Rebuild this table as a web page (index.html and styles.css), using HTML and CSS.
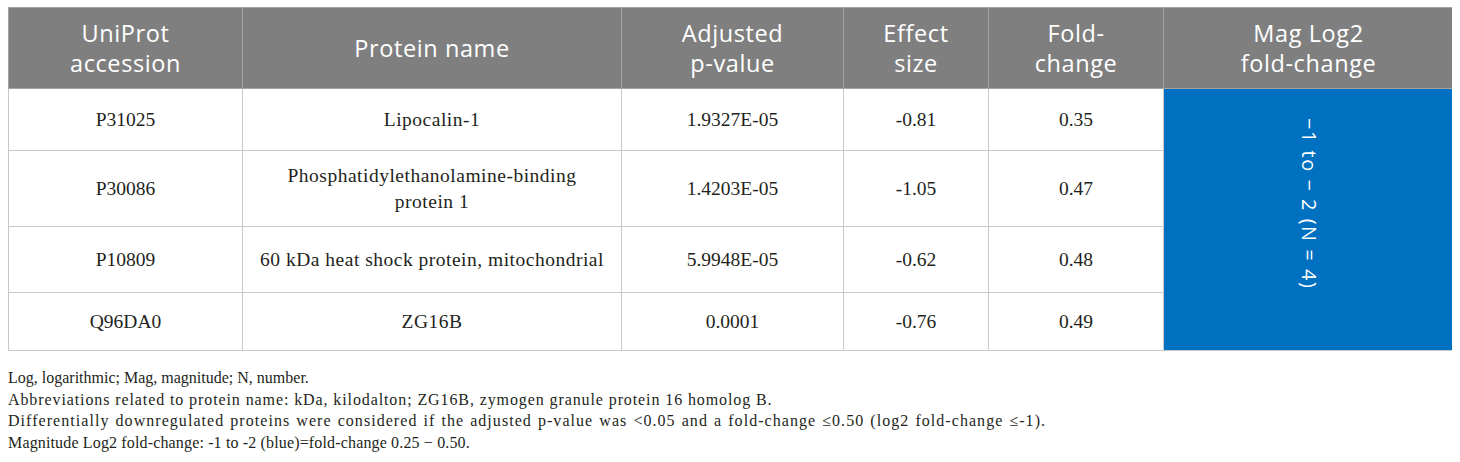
FILE: index.html
```html
<!DOCTYPE html>
<html lang="en">
<head>
    <meta charset="UTF-8">
    <title>Downregulated proteins</title>
    <link rel="stylesheet" href="styles.css">
</head>
<body>
    <table class="results">
        <colgroup>
            <col class="c-acc">
            <col class="c-name">
            <col class="c-p">
            <col class="c-eff">
            <col class="c-fold">
            <col class="c-mag">
        </colgroup>
        <tr class="head">
            <th>UniProt<br>accession</th>
            <th>Protein name</th>
            <th>Adjusted<br>p-value</th>
            <th>Effect<br>size</th>
            <th>Fold-<br>change</th>
            <th>Mag Log2<br>fold-change</th>
        </tr>
        <tr class="r1">
            <td>P31025</td>
            <td class="name">Lipocalin-1</td>
            <td>1.9327E-05</td>
            <td>-0.81</td>
            <td>0.35</td>
            <td class="mag" rowspan="4"><span class="vert">&minus;1 to &minus; 2 (N = 4)</span></td>
        </tr>
        <tr class="r2">
            <td>P30086</td>
            <td class="name">Phosphatidylethanolamine-binding<br>protein 1</td>
            <td>1.4203E-05</td>
            <td>-1.05</td>
            <td>0.47</td>
        </tr>
        <tr class="r3">
            <td>P10809</td>
            <td class="name">60 kDa heat shock protein, mitochondrial</td>
            <td>5.9948E-05</td>
            <td>-0.62</td>
            <td>0.48</td>
        </tr>
        <tr class="r4">
            <td>Q96DA0</td>
            <td class="name">ZG16B</td>
            <td>0.0001</td>
            <td>-0.76</td>
            <td>0.49</td>
        </tr>
    </table>

    <div class="notes">
        <p>Log, logarithmic; Mag, magnitude; N, number.</p>
        <p class="wide">Abbreviations related to protein name: kDa, kilodalton; ZG16B, zymogen granule protein 16 homolog B.</p>
        <p class="wider">Differentially downregulated proteins were considered if the adjusted p-value was &lt;0.05 and a fold-change &le;0.50 (log2 fold-change &le;-1).</p>
        <p class="slight">Magnitude Log2 fold-change: -1 to -2 (blue)=fold-change 0.25 &minus; 0.50.</p>
    </div>
</body>
</html>
```

FILE: styles.css
```css
body {
	margin: 7px 8px;
	background-color: #fff;
	color: #231f20;
	font-family: "Liberation Serif", "Times New Roman", serif;
}

.results {
	border-collapse: collapse;
	table-layout: fixed;
	width: 1445px;
}

.c-acc { width: 234px; }
.c-name { width: 379px; }
.c-p { width: 222px; }
.c-eff { width: 145px; }
.c-fold { width: 175px; }
.c-mag { width: 290px; }

th, td {
	border: 1px solid #c8c8c8;
	text-align: center;
	vertical-align: middle;
	padding: 0 4px;
}

th {
	background-color: #7f7f7f;
	color: #fff;
	font-family: "Open Sans", "Noto Sans", sans-serif;
	font-weight: normal;
	font-size: 23.5px;
	letter-spacing: 0.6px;
	line-height: 30px;
	border-color: #a3a3a3;
}

.head { height: 81px; }

td {
	font-size: 19.5px;
	line-height: 26px;
}

td.name {
	letter-spacing: 0.5px;
}

.r1 { height: 62px; }
.r2 { height: 76px; }
.r3 { height: 66px; }
.r4 { height: 58px; }

.mag {
	background-color: #0070c0;
	color: #fff;
	padding-bottom: 24px;
}

.vert {
	writing-mode: vertical-rl;
	font-family: "Open Sans", "Noto Sans", sans-serif;
	font-size: 20px;
	letter-spacing: 1.5px;
}

.notes {
	margin-top: 16px;
	font-size: 16px;
	line-height: 21.5px;
}

.notes p {
	margin: 0;
}

.notes .wide {
	letter-spacing: 0.9px;
}

.notes .wider {
	letter-spacing: 1.05px;
	word-spacing: 1px;
}

.notes .slight {
	letter-spacing: 0.15px;
}
```
